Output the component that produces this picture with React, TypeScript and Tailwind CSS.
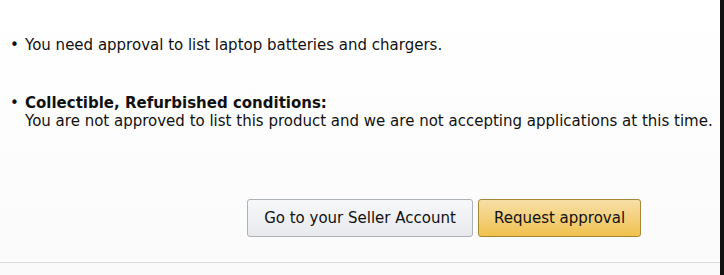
export default function App() {
  return (
    <div className="flex h-[275px] w-[724px] overflow-hidden bg-white font-['DejaVu_Sans',Verdana,sans-serif] text-[#111]">
      <div className="flex flex-1 flex-col">
        <div className="flex-1 bg-gradient-to-b from-white to-[#fbfbfb]">
          <ul className="pl-[25px] pt-[36px] text-[15px] leading-[18px]">
            <li className="relative">
              <span className="absolute -left-[15px] top-0">•</span>
              You need approval to list laptop batteries and chargers.
            </li>
            <li className="relative mt-[40px]">
              <span className="absolute -left-[15px] top-0">•</span>
              <div className="font-bold">Collectible, Refurbished conditions:</div>
              <div>
                You are not approved to list this product and we are not accepting applications at this time.
              </div>
            </li>
          </ul>
          <div className="mt-[69px] flex gap-[5px] pl-[247px]">
            <button className="h-[38px] w-[226px] rounded-[3px] border border-[#adb1b8] bg-gradient-to-b from-[#f7f8fa] to-[#e7e9ec] text-[15px] text-[#111]">
              Go to your Seller Account
            </button>
            <button className="h-[38px] w-[163px] rounded-[3px] border border-[#a88734] bg-gradient-to-b from-[#f7dfa5] to-[#f0c14b] text-[15px] text-[#111]">
              Request approval
            </button>
          </div>
        </div>
        <div className="h-[13px] border-t border-[#ddd] bg-[#fafafa]" />
      </div>
      <div className="w-[4px] bg-[#111]" />
    </div>
  );
}
